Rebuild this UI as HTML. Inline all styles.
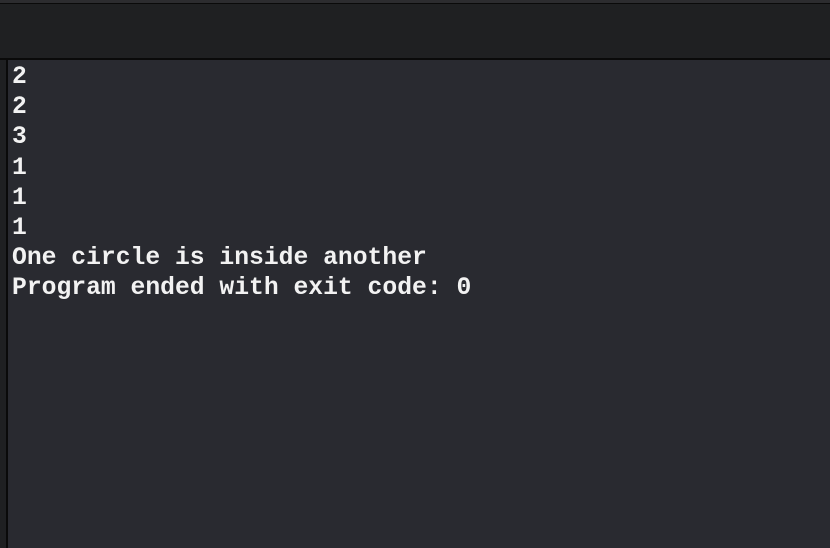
<html><head><style>
body{margin:0;width:830px;height:548px;background:#292a30;position:relative;overflow:hidden}
.t1{position:absolute;left:0;top:0;width:830px;height:3px;background:#2c2c2f}
.t2{position:absolute;left:0;top:3px;width:830px;height:1px;background:#0a0a0a}
.hd{position:absolute;left:0;top:4px;width:830px;height:54px;background:#1f2022}
.hl{position:absolute;left:0;top:58px;width:830px;height:2px;background:#0a0a0a}
.ls{position:absolute;left:0;top:60px;width:6px;height:488px;background:#1f2022}
.lb{position:absolute;left:6px;top:60px;width:2px;height:488px;background:#0a0a0a}
pre{position:absolute;left:12px;top:62px;margin:0;font-family:"Liberation Mono",monospace;font-weight:bold;font-size:24.7px;line-height:30.2px;color:#f2f2f2}
</style></head><body>
<div class="t1"></div><div class="t2"></div><div class="hd"></div><div class="hl"></div><div class="ls"></div><div class="lb"></div>
<pre>2
2
3
1
1
1
One circle is inside another
Program ended with exit code: 0</pre>
</body></html>
